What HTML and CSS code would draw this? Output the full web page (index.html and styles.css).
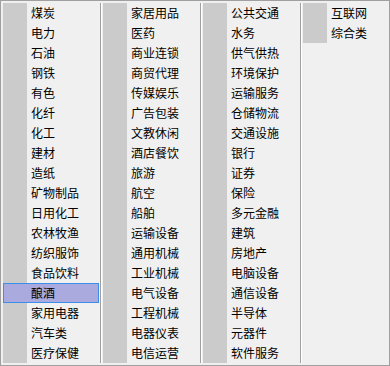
FILE: index.html
```html
<!DOCTYPE html>
<html lang="zh-CN">
<head>
    <meta charset="UTF-8">
    <title>行业菜单</title>
    <link rel="stylesheet" href="styles.css">
</head>
<body>
<div class="menu">
    <ul class="menu-col">
        <li class="menu-item">煤炭</li>
        <li class="menu-item">电力</li>
        <li class="menu-item">石油</li>
        <li class="menu-item">钢铁</li>
        <li class="menu-item">有色</li>
        <li class="menu-item">化纤</li>
        <li class="menu-item">化工</li>
        <li class="menu-item">建材</li>
        <li class="menu-item">造纸</li>
        <li class="menu-item">矿物制品</li>
        <li class="menu-item">日用化工</li>
        <li class="menu-item">农林牧渔</li>
        <li class="menu-item">纺织服饰</li>
        <li class="menu-item">食品饮料</li>
        <li class="menu-item selected">酿酒</li>
        <li class="menu-item">家用电器</li>
        <li class="menu-item">汽车类</li>
        <li class="menu-item">医疗保健</li>
    </ul>
    <div class="menu-sep"></div>
    <ul class="menu-col">
        <li class="menu-item">家居用品</li>
        <li class="menu-item">医药</li>
        <li class="menu-item">商业连锁</li>
        <li class="menu-item">商贸代理</li>
        <li class="menu-item">传媒娱乐</li>
        <li class="menu-item">广告包装</li>
        <li class="menu-item">文教休闲</li>
        <li class="menu-item">酒店餐饮</li>
        <li class="menu-item">旅游</li>
        <li class="menu-item">航空</li>
        <li class="menu-item">船舶</li>
        <li class="menu-item">运输设备</li>
        <li class="menu-item">通用机械</li>
        <li class="menu-item">工业机械</li>
        <li class="menu-item">电气设备</li>
        <li class="menu-item">工程机械</li>
        <li class="menu-item">电器仪表</li>
        <li class="menu-item">电信运营</li>
    </ul>
    <div class="menu-sep"></div>
    <ul class="menu-col">
        <li class="menu-item">公共交通</li>
        <li class="menu-item">水务</li>
        <li class="menu-item">供气供热</li>
        <li class="menu-item">环境保护</li>
        <li class="menu-item">运输服务</li>
        <li class="menu-item">仓储物流</li>
        <li class="menu-item">交通设施</li>
        <li class="menu-item">银行</li>
        <li class="menu-item">证券</li>
        <li class="menu-item">保险</li>
        <li class="menu-item">多元金融</li>
        <li class="menu-item">建筑</li>
        <li class="menu-item">房地产</li>
        <li class="menu-item">电脑设备</li>
        <li class="menu-item">通信设备</li>
        <li class="menu-item">半导体</li>
        <li class="menu-item">元器件</li>
        <li class="menu-item">软件服务</li>
    </ul>
    <div class="menu-sep"></div>
    <ul class="menu-col last">
        <li class="menu-item">互联网</li>
        <li class="menu-item">综合类</li>
    </ul>
</div>
</body>
</html>
```

FILE: styles.css
```css
* { margin: 0; padding: 0; box-sizing: border-box; }
body {
    font-family: "Noto Sans CJK SC", "Microsoft YaHei", sans-serif;
    font-size: 12px;
    color: #000;
    background: #f0f0f0;
}
.menu {
    width: 390px;
    height: 366px;
    display: flex;
    padding: 2px;
    background: #f0f0f0;
    border: 1px solid #a0a0a0;
}
.menu-col {
    list-style: none;
    flex: 0 0 96px;
}
.menu-col.last { flex: 1 1 auto; }
.menu-item {
    height: 20px;
    line-height: 20px;
    padding-left: 28px;
    white-space: nowrap;
    background: linear-gradient(to right, #cbcbcb 0, #cbcbcb 24px, transparent 24px);
}
.menu-item.selected {
    background: #aaaade;
    border: 1px solid #3d8ee8;
    padding-left: 27px;
    line-height: 18px;
}
.menu-sep {
    flex: 0 0 auto;
    width: 2px;
    margin: 0 1px;
    border-left: 1px solid #a0a0a0;
    border-right: 1px solid #ffffff;
}
```
